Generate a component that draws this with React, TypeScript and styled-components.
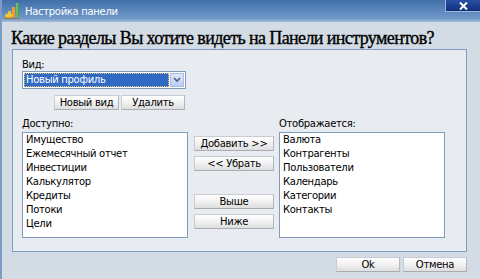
import React from "react";
import styled, { createGlobalStyle } from "styled-components";

const Global = createGlobalStyle`
  html, body { margin: 0; padding: 0; background: #d3dbe4; }
  body { font-family: "DejaVu Sans", Verdana, sans-serif; font-size: 10px; letter-spacing: -0.3px; color: #000; }
  * { box-sizing: border-box; }
`;

const Window = styled.div`
  width: 480px;
  height: 279px;
  display: flex;
  flex-direction: column;
  background: #d3dbe4;
  border-left: 2px solid #7d9cc4;
  overflow: hidden;
`;

const TitleBar = styled.div`
  height: 22px;
  margin-left: -2px;
  display: flex;
  align-items: flex-start;
  background: linear-gradient(180deg, #3f6ea7 0%, #5b86bb 45%, #7199c9 85%, #a9bfdc 100%);
  color: #fff;
`;

const TitleIcon = styled.div`
  width: 18px;
  height: 18px;
  margin: 2px 0 0 4px;
  display: flex;
`;

const TitleText = styled.div`
  margin: 5px 0 0 3px;
  font-size: 10px;
  line-height: 13px;
  flex: 1;
`;

const CloseBtn = styled.div`
  width: 35px;
  height: 12px;
  background: linear-gradient(180deg, #2a4fa3 0%, #12307f 100%);
  border-left: 1px solid #9fb4dc;
  border-bottom: 1px solid #9fb4dc;
  display: flex;
  align-items: center;
  justify-content: center;
`;

const Heading = styled.h1`
  margin: 0;
  height: 27px;
  padding: 5px 0 0 9px;
  font-family: "Liberation Serif", "Times New Roman", serif;
  font-size: 18px;
  line-height: 22px;
  font-weight: normal;
  letter-spacing: -0.6px;
  -webkit-text-stroke: 0.35px #000;
  color: #000;
  white-space: nowrap;
`;

const Panel = styled.div`
  margin: 0 13px 0 10px;
  height: 203px;
  border: 1px solid #7f9dc2;
  background: #e8ebef;
  padding: 8px 0 0 9px;
  display: flex;
  flex-direction: column;
`;

const Label = styled.div`
  font-size: 10px;
  line-height: 13px;
  height: 13px;
`;

const SelectBox = styled.div`
  width: 164px;
  height: 18px;
  border: 1px solid #7f9db9;
  background: #fff;
  display: flex;
  align-items: stretch;
  padding: 1px;
`;

const SelectValue = styled.div`
  flex: 1;
  background: #316ac5;
  color: #fff;
  border: 1px dotted #e8c25a;
  line-height: 12px;
  padding-left: 1px;
  font-size: 10px;
`;

const SelectArrow = styled.div`
  width: 14px;
  margin-left: 1px;
  background: linear-gradient(180deg, #dce6fb 0%, #bccdf3 100%);
  border: 1px solid #a9bde8;
  display: flex;
  align-items: center;
  justify-content: center;
`;

const ButtonRow = styled.div`
  width: 163px;
  display: flex;
  justify-content: flex-end;
  gap: 2px;
  margin-top: 6px;
`;

const Btn = styled.div<{ $w?: number }>`
  width: ${(p) => p.$w ?? 80}px;
  height: 15px;
  border: 1px solid #c9ccd1;
  border-bottom-color: #a9acb1;
  border-right-color: #b3b6bb;
  background: linear-gradient(180deg, #ffffff 0%, #f3f3f3 45%, #dedede 100%);
  display: flex;
  align-items: center;
  justify-content: center;
  font-size: 10px;
  line-height: 13px;
  white-space: nowrap;
`;

const ListsGrid = styled.div`
  margin-top: 7px;
  display: grid;
  grid-template-columns: 166px 79px 166px;
  grid-template-rows: 15px 106px;
  column-gap: 6px;
`;

const ListLabel = styled(Label)<{ $col: number }>`
  grid-column: ${(p) => p.$col};
  grid-row: 1;
`;

const ListBox = styled.div<{ $col: number }>`
  grid-column: ${(p) => p.$col};
  grid-row: 2;
  border: 1px solid #7f9db9;
  background: #fff;
  padding: 0 0 0 3px;
  display: flex;
  flex-direction: column;
`;

const ListItem = styled.div`
  height: 14px;
  line-height: 14px;
  font-size: 10px;
  white-space: nowrap;
`;

const MidButtons = styled.div`
  grid-column: 2;
  grid-row: 2;
  padding-top: 4px;
  display: flex;
  flex-direction: column;
  gap: 5px;
`;

const Spacer = styled.div`
  height: 13px;
`;

const Footer = styled.div`
  display: flex;
  justify-content: flex-end;
  gap: 3px;
  padding: 5px 13px 0 0;
`;

const available = ["Имущество", "Ежемесячный отчет", "Инвестиции", "Калькулятор", "Кредиты", "Потоки", "Цели"];
const shown = ["Валюта", "Контрагенты", "Пользователи", "Календарь", "Категории", "Контакты"];

const AppIcon = () => (
  <svg width="18" height="18" viewBox="0 0 18 18">
    <rect x="12" y="1" width="3" height="14" fill="#3fa64a" />
    <rect x="12.5" y="1" width="1" height="14" fill="#8fd67f" />
    <rect x="8" y="5" width="3" height="10" fill="#f0a020" />
    <rect x="4" y="9" width="3" height="6" fill="#e8c030" />
    <ellipse cx="5" cy="15" rx="4" ry="2" fill="#d98a1a" />
    <ellipse cx="5" cy="13.5" rx="4" ry="2" fill="#f4c542" />
    <rect x="1" y="16" width="15" height="1" fill="#9a7a40" />
  </svg>
);

export default function App() {
  return (
    <>
      <Global />
      <Window>
        <TitleBar>
          <TitleIcon>
            <AppIcon />
          </TitleIcon>
          <TitleText>Настройка панели</TitleText>
          <CloseBtn>
            <svg width="9" height="8" viewBox="0 0 9 8">
              <path d="M1 0.5 L8 7.5 M8 0.5 L1 7.5" stroke="#fff" strokeWidth="2" />
            </svg>
          </CloseBtn>
        </TitleBar>
        <Heading>Какие разделы Вы хотите видеть на Панели инструментов?</Heading>
        <Panel>
          <Label>Вид:</Label>
          <SelectBox>
            <SelectValue>Новый профиль</SelectValue>
            <SelectArrow>
              <svg width="8" height="6" viewBox="0 0 8 6">
                <path d="M1 1 L4 4 L7 1" stroke="#4d6185" strokeWidth="1.6" fill="none" />
              </svg>
            </SelectArrow>
          </SelectBox>
          <ButtonRow>
            <Btn $w={65}>Новый вид</Btn>
            <Btn $w={64}>Удалить</Btn>
          </ButtonRow>
          <ListsGrid>
            <ListLabel $col={1}>Доступно:</ListLabel>
            <ListLabel $col={3}>Отображается:</ListLabel>
            <ListBox $col={1}>
              {available.map((t) => (
                <ListItem key={t}>{t}</ListItem>
              ))}
            </ListBox>
            <MidButtons>
              <Btn>Добавить &gt;&gt;</Btn>
              <Btn>&lt;&lt; Убрать</Btn>
              <Spacer />
              <Btn>Выше</Btn>
              <Btn>Ниже</Btn>
            </MidButtons>
            <ListBox $col={3}>
              {shown.map((t) => (
                <ListItem key={t}>{t}</ListItem>
              ))}
            </ListBox>
          </ListsGrid>
        </Panel>
        <Footer>
          <Btn $w={64}>Ok</Btn>
          <Btn $w={64}>Отмена</Btn>
        </Footer>
      </Window>
    </>
  );
}
